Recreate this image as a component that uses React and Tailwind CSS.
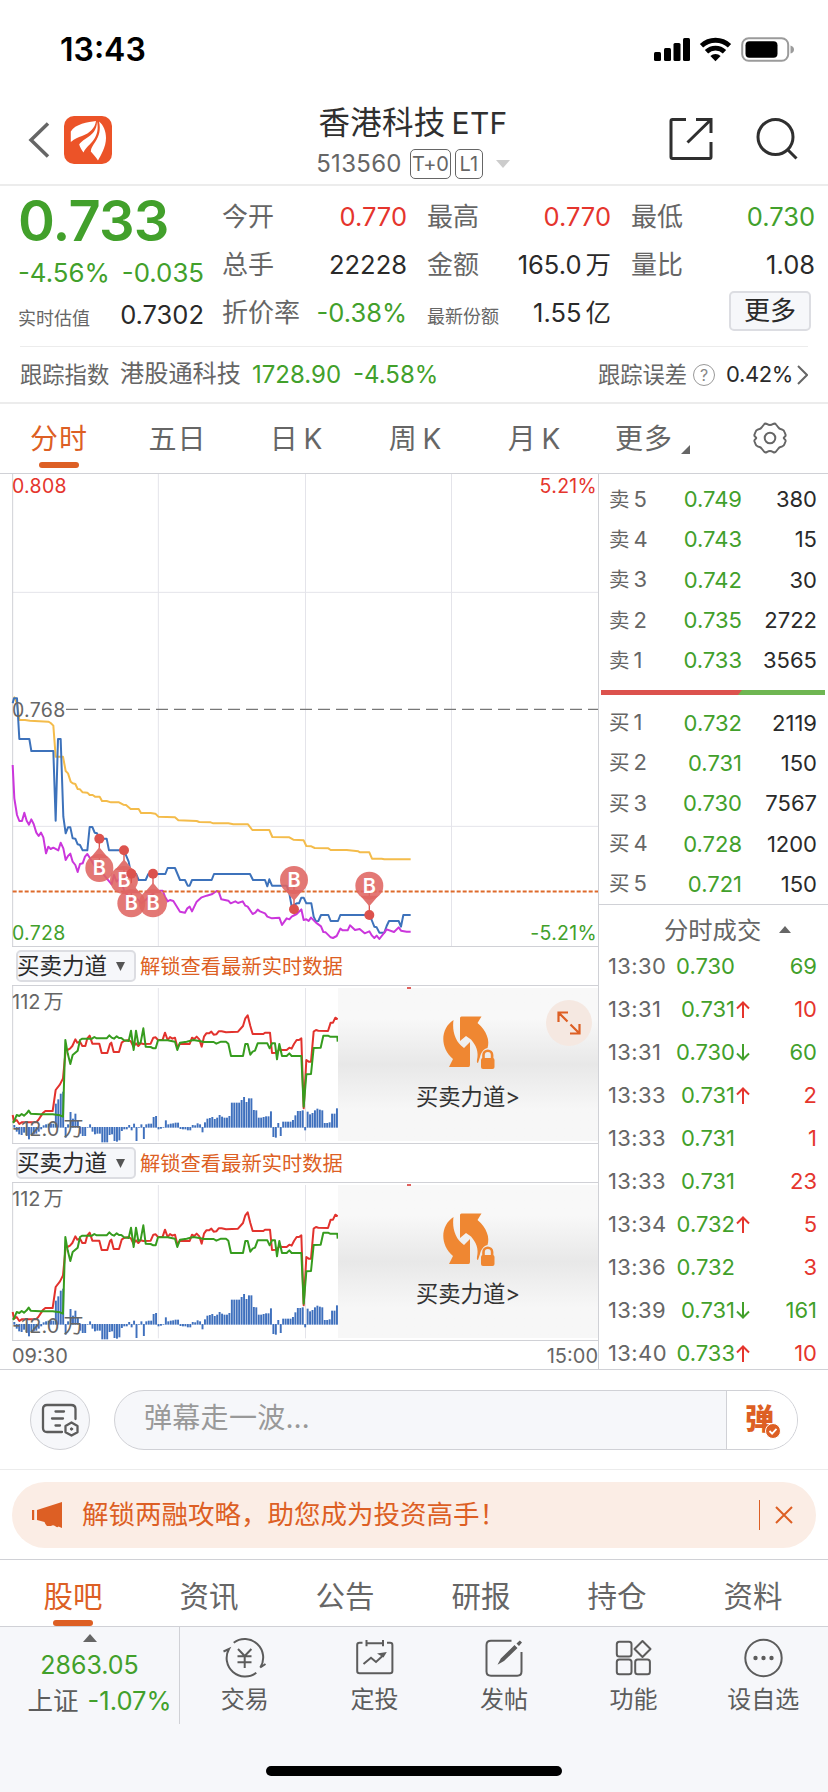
import { Fragment } from "react";

const GREEN = "text-[#42a02b]";
const RED = "text-[#e5352d]";
const DARK = "text-[#2a2a2a]";

const stats = [
  { label: "今开", value: "0.770", color: RED },
  { label: "最高", value: "0.770", color: RED },
  { label: "最低", value: "0.730", color: GREEN },
  { label: "总手", value: "22228", color: DARK },
  { label: "金额", value: "165.0", unit: "万", color: DARK },
  { label: "量比", value: "1.08", color: DARK },
  { label: "折价率", value: "-0.38%", color: GREEN },
  { label: "最新份额", value: "1.55", unit: "亿", color: DARK, small: true },
];

const sells = [
  ["5", "0.749", "380"],
  ["4", "0.743", "15"],
  ["3", "0.742", "30"],
  ["2", "0.735", "2722"],
  ["1", "0.733", "3565"],
];

const buys = [
  ["1", "0.732", "2119"],
  ["2", "0.731", "150"],
  ["3", "0.730", "7567"],
  ["4", "0.728", "1200"],
  ["5", "0.721", "150"],
];

const trades = [
  ["13:30", "0.730", "", "69", GREEN],
  ["13:31", "0.731", "up", "10", RED],
  ["13:31", "0.730", "down", "60", GREEN],
  ["13:33", "0.731", "up", "2", RED],
  ["13:33", "0.731", "", "1", RED],
  ["13:33", "0.731", "", "23", RED],
  ["13:34", "0.732", "up", "5", RED],
  ["13:36", "0.732", "", "3", RED],
  ["13:39", "0.731", "down", "161", GREEN],
  ["13:40", "0.733", "up", "10", RED],
];

// chart series, three units to the pixel
const priceLine =
  "38,700 42,685 51,685 58,807 88,807 94,843 160,843 167,1052 174,807 182,807 190,1040 197,1090 204,1072 211,1072 218,1105 226,1106 233,1123 240,1125 248,1141 262,1141 269,1071 277,1071 284,1088 291,1090 298,1106 320,1106 327,1141 372,1141 386,1175 393,1211 408,1211 416,1230 437,1230 445,1212 496,1212 503,1194 525,1194 540,1230 555,1230 563,1247 569,1247 576,1230 635,1230 642,1212 750,1212 759,1230 795,1230 802,1249 808,1228 816,1247 860,1247 868,1270 875,1310 890,1300 897,1300 904,1283 911,1283 919,1300 934,1300 941,1340 948,1354 955,1353 963,1335 985,1335 992,1353 1014,1353 1021,1335 1108,1335 1115,1350 1123,1370 1130,1372 1138,1388 1153,1388 1160,1368 1167,1353 1196,1353 1203,1370 1210,1335 1232,1335";
const averageLine =
  "42,680 51,700 58,750 75,750 90,752 145,755 152,759 160,767 167,860 189,860 197,903 204,910 212,935 218,940 226,942 233,957 240,958 248,967 262,968 269,975 278,975 285,980 299,980 306,993 320,993 333,997 357,997 370,1004 378,1005 392,1017 416,1017 423,1029 452,1029 466,1031 475,1040 525,1042 535,1051 590,1053 598,1056 632,1057 640,1060 685,1060 700,1063 744,1063 757,1080 808,1080 817,1101 868,1102 880,1109 911,1111 919,1128 934,1129 944,1134 985,1135 992,1140 1040,1140 1075,1144 1080,1147 1108,1147 1116,1166 1145,1166 1153,1168 1232,1168";
const indexLine =
  "38,885 43,985 51,1035 58,1053 66,1053 73,1028 80,1052 87,1064 94,1048 101,1062 109,1088 116,1098 123,1088 130,1102 138,1150 145,1130 152,1137 160,1133 175,1141 182,1118 190,1135 197,1170 204,1158 211,1151 218,1175 226,1185 233,1206 240,1182 248,1180 255,1160 262,1152 272,1168 285,1190 300,1200 320,1225 335,1243 342,1215 350,1235 360,1225 372,1260 385,1280 393,1300 410,1285 425,1300 437,1290 459,1270 475,1262 488,1262 495,1280 503,1294 510,1290 520,1293 540,1325 555,1328 562,1315 569,1310 576,1324 590,1295 605,1282 620,1277 635,1273 650,1263 656,1265 664,1288 685,1292 692,1300 706,1294 714,1299 728,1294 736,1307 743,1310 758,1332 766,1328 773,1319 780,1324 795,1330 802,1340 816,1345 838,1343 846,1365 853,1355 860,1345 868,1348 875,1340 890,1332 904,1318 911,1350 919,1348 926,1353 933,1343 948,1358 963,1369 970,1386 977,1387 992,1402 999,1404 1010,1398 1021,1376 1028,1381 1043,1381 1050,1366 1065,1380 1079,1377 1094,1390 1108,1384 1116,1397 1123,1404 1130,1397 1138,1407 1153,1388 1160,1378 1182,1386 1196,1372 1203,1382 1220,1385 1232,1385";
const buyForce =
  "38,525 42,545 50,540 58,552 65,547 108,547 115,540 128,520 136,513 158,513 167,450 180,433 189,415 197,330 202,330 210,326 217,318 226,298 232,308 240,305 247,318 256,318 262,295 269,287 277,311 298,311 305,339 322,339 330,312 334,308 341,336 357,336 365,308 372,303 386,300 393,305 400,320 408,310 415,318 422,310 430,312 452,311 460,293 467,292 474,300 488,299 495,278 503,300 510,291 517,296 525,293 532,322 540,311 569,312 576,293 583,297 590,290 598,298 605,320 612,290 619,280 627,280 634,275 641,284 649,283 656,274 665,274 678,277 714,275 729,258 736,235 743,226 751,258 758,282 790,282 795,278 810,278 816,339 830,338 838,328 846,330 860,330 868,323 875,326 882,312 890,300 897,300 904,295 911,505 919,360 926,365 933,365 941,275 948,270 955,272 984,273 992,248 999,248 1006,233 1013,238";
const sellForce =
  "38,548 42,545 50,525 58,528 65,522 72,527 80,520 86,512 92,521 121,523 158,523 180,526 189,530 196,300 203,340 211,372 218,345 233,332 240,300 247,296 276,296 283,291 290,295 320,295 328,286 335,293 342,296 350,289 357,294 364,294 372,301 386,303 393,272 401,330 408,272 415,312 422,308 430,265 437,320 452,321 460,325 467,325 474,301 503,301 525,305 532,330 540,308 560,305 580,300 598,303 612,306 641,306 649,311 663,305 678,305 685,311 693,348 729,348 736,312 743,312 751,344 758,335 765,332 773,310 802,310 809,325 816,310 825,310 831,358 838,312 846,348 860,348 868,340 875,348 904,348 911,500 919,403 933,402 941,324 962,323 970,287 984,287 990,290 1012,290 1013,305";
const netForce = [
  6, -12, -20, -22, -15, -22, -35, -22, -20, -18, -12, -5, 5, 8, 10, 10, 10, 70, 83, 100, 106, -30, 8, 45, 25, 40, 20,
  -18, -25, -25, 0, 8, -12, -20, -18, -18, -44, -44, -44, -22, -20, -40, -42, -38, -10, -5, -5, 6, -8, 10, -40, 0, 8,
  -34, 8, 10, 10, 30, 33, -5, -3, 0, 20, 8, 10, 11, 13, 13, -4, -5, -5, -8, -8, 6, 5, 11, 8, -14, 14, 25, 27, 30, 24,
  28, 36, 31, 28, 28, 33, 73, 73, 73, 73, 81, 90, 75, 86, 86, 51, 50, 28, 28, 30, 32, 32, 47, -28, -30, 12, -25, 16, 16,
  16, 16, 21, 35, 48, 48, 50, -8, 46, 38, 42, 50, 55, 52, 50, 12, 12, 14, 40, 40, 56, 50,
];

const markers = [
  { x: 298, dot: 1106, y: 1194 },
  { x: 372, dot: 1141, y: 1230 },
  { x: 394, dot: 1211, y: 1300 },
  { x: 459, dot: 1211, y: 1300 },
  { x: 882, dot: 1318, y: 1230 },
  { x: 1108, dot: 1335, y: 1247 },
];

function StatusBar() {
  return (
    <div className="h-[88px] pt-[11px] pl-[60px] pr-[34px] flex items-center justify-between text-black">
      <span className="text-[32px] leading-[40px] font-semibold">13:43</span>
      <svg width="142" height="28" viewBox="0 0 142 28">
        <g transform="translate(1 1)">
          <rect x="1" y="15" width="7" height="9" rx="1.5" />
          <rect x="11" y="11" width="7" height="13" rx="1.5" />
          <rect x="20.500" y="6" width="7" height="18" rx="1.500" />
          <rect x="30" y="1" width="7" height="23" rx="1.5" />
          <g fill="none" stroke="#000" strokeWidth="4.800">
            <path d="M48.500 8.800a20.500 20.500 0 0 1 28 0" />
            <path d="M53.500 14.800a13 13 0 0 1 18 0" />
          </g>
          <path d="M57.400 19a7.500 7.500 0 0 1 10.200 0l-5.100 5.200z" />
          <rect x="89.200" y="1.200" width="46" height="22.600" rx="6.500" fill="none" stroke="#9b9b9b" strokeWidth="2" />
          <rect x="92.500" y="4.300" width="32" height="16.400" rx="4" />
          <path d="M137.500 8.500q3.500 1 3.500 4t-3.500 4z" fill="#9b9b9b" />
        </g>
      </svg>
    </div>
  );
}

function Header() {
  return (
    <div className="h-[98px] border-b-2 border-[#ececec] flex items-start justify-between pl-[28px] pr-[29px]">
      <div className="w-[170px] flex items-center gap-[14px] pt-[28px]">
        <svg width="22" height="36" viewBox="0 0 22 36" fill="none" stroke="#666" strokeWidth="3.500">
          <path d="M20 1.500L3 18l17 16.500" />
        </svg>
        <svg width="48" height="48" viewBox="0 0 48 48">
          <rect width="48" height="48" rx="10" fill="#ec5328" />
          <g fill="#fff">
            <path d="M32 5C24 6 11 8 6.800 15.500V26C11 22.500 14 21.500 18 20C26 17 31 12 32 5Z" />
            <path d="M33 5.500C33 14 28 19 22 22.500C18 25 16 27 15.200 28.500C16 31 17.500 34 19.500 36.500C22 31 26 29 29.500 24C33.500 18.500 34.500 12 33 5.500Z" />
            <path d="M35 5.500C37 14 35 20 31.500 25.500C28.500 30 27 32 26.800 35.500C29 38 32 41 34 44.500C37 39 42 31 42 22C42 15 39.500 9 35 5.500Z" />
          </g>
        </svg>
      </div>
      <div className="flex flex-col items-center">
        <h1 className="mt-[15px] text-[31.500px] leading-[40px] text-[#2f2f2f] tracking-[0.3px]">
          香港科技<span className="ml-[6px] text-[30px]">ETF</span>
        </h1>
        <div className="mt-[6px] flex items-center gap-[4px] text-[#666] leading-[30px]">
          <span className="text-[24px] tracking-[0.3px] mr-[4px]">513560</span>
          <span className="h-[30px] w-[41px] border border-[#666] rounded-[5px] text-[20px] leading-[28px] flex justify-center tracking-[-0.3px]">T+0</span>
          <span className="h-[30px] w-[28px] border border-[#666] rounded-[5px] text-[20px] leading-[28px] flex justify-center">L1</span>
          <svg className="ml-[9px]" width="14" height="8" viewBox="0 0 14 8"><path d="M0 0h14L7 8z" fill="#ccc" /></svg>
        </div>
      </div>
      <div className="w-[171px] flex items-center justify-end gap-[42px] pt-[29px]">
        <svg width="44" height="44" viewBox="0 0 44 44" fill="none" stroke="#2f2f2f" strokeWidth="3">
          <path d="M17 2.500H3.500Q2 2.500 2 4v36Q2 41.500 3.500 41.500h37Q42 41.500 42 40V25" />
          <path d="M27 2.500h15V16M41.500 3L18.500 25.500" />
        </svg>
        <svg width="44" height="44" viewBox="0 0 44 44" fill="none" stroke="#2f2f2f" strokeWidth="3">
          <circle cx="20.500" cy="20" r="17.500" />
          <path d="M32.500 32.500L41.500 41.500" />
        </svg>
      </div>
    </div>
  );
}

function Quote() {
  return (
    <div>
      <div className="h-[160px] flex text-[26px] leading-[48px]">
        <div className="w-[222px] pl-[18px] pr-[18px] pt-[7px]">
          <div className={`${GREEN} text-[56px] leading-[56px] font-semibold tracking-[-0.8px]`}>0.733</div>
          <div className={`${GREEN} flex justify-between text-[25.8px]`}>
            <span>-4.56%</span>
            <span>-0.035</span>
          </div>
          <div className="flex justify-between -mt-[6px]">
            <span className="text-[18px] text-[#666] pt-[4px]">实时估值</span>
            <span className={`${DARK} text-[25.5px]`}>0.7302</span>
          </div>
        </div>
        <div className="flex-1 grid grid-cols-[185px_184px_184px] grid-rows-[48px_48px_48px] gap-x-[20px] pt-[7px]">
          {stats.map((s) => (
            <div key={s.label} className="flex justify-between">
              <span className={s.small ? "text-[18px] text-[#666] pt-[4px]" : "text-[#666]"}>{s.label}</span>
              <span className={`${s.color} text-[25.500px]`}>
                {s.value}
                {s.unit && <span className="ml-[4px]">{s.unit}</span>}
              </span>
            </div>
          ))}
          <button className="justify-self-end mr-[4px] mt-[2px] w-[82px] h-[40px] border-2 border-[#dcdde2] rounded-[5px] bg-[#f6f7fa] leading-[34px] text-[#2a2a2a]">
            更多
          </button>
        </div>
      </div>
      <div className="mx-[20px] h-[56px] border-t border-[#ececec] flex items-center text-[24px] text-[#666]">
        <span className="text-[22.300px] w-[100px]">跟踪指数</span>
        <span className="w-[132px] text-[24.200px]">港股通科技</span>
        <span className={`${GREEN} w-[101px]`}>1728.90</span>
        <span className={GREEN}>-4.58%</span>
        <span className="ml-auto text-[22.300px]">跟踪误差</span>
        <span className="ml-[6px] w-[22px] h-[22px] rounded-full border border-[#999] text-[#888] text-[16px] leading-[20px] text-center">?</span>
        <span className={`${DARK} ml-[11px] text-[22px] tracking-[-0.4px]`}>0.42%</span>
        <svg className="ml-[4px]" width="11" height="20" viewBox="0 0 11 20" fill="none" stroke="#666" strokeWidth="2">
          <path d="M1 1l9 9-9 9" />
        </svg>
      </div>
    </div>
  );
}

function PeriodTabs() {
  return (
    <div className="h-[72px] border-t-2 border-b border-t-[#ececec] border-b-[#d0d1d6] flex text-[28px] leading-[70px] text-[#666] tracking-[1px]">
      <div className="w-[118px] flex flex-col items-center text-[#dd5f24]">
        <span className="h-[58px]">分时</span>
        <span className="w-[40px] h-[6px] rounded-full bg-[#dd5f24]" />
      </div>
      {["五日", "日 K", "周 K", "月 K"].map((t) => (
        <div key={t} className="w-[119px] text-center [word-spacing:-4px]">{t}</div>
      ))}
      <div className="w-[117px] flex justify-center">
        更多
        <svg className="mt-[41px] ml-[8px]" width="9" height="9" viewBox="0 0 9 9"><path d="M9 0v9H0z" fill="#666" /></svg>
      </div>
      <div className="flex-1 flex justify-center items-center pb-[2px]">
        <svg width="34" height="34" viewBox="0 0 34 34" fill="none" stroke="#666" strokeWidth="2" strokeLinejoin="round">
          <path d="M11 3.500Q12 2 14 3Q17 5 20 3Q22 2 23 3.500L25 6Q26 8 29 8.500Q31 9 31.500 11L32.500 13.500Q33 15 31.500 16Q30 17 31.500 18Q33 19 32.500 20.500L31.500 23Q31 25 29 25.500Q26 26 25 28L23 30.500Q22 32 20 31Q17 29 14 31Q12 32 11 30.500L9 28Q8 26 5 25.500Q3 25 2.500 23L1.500 20.500Q1 19 2.500 18Q4 17 2.500 16Q1 15 1.500 13.500L2.500 11Q3 9 5 8.500Q8 8 9 6Z" />
          <circle cx="17" cy="17" r="5.300" />
        </svg>
      </div>
    </div>
  );
}

function PriceChart() {
  return (
    <div className="relative h-[473px] border-b border-[#d0d1d6] ml-[12px]">
      <svg className="-ml-[12px]" width="598" height="472" viewBox="0 12 1794 1416" fill="none">
        <g stroke="#e4e4ea" strokeWidth="3">
          <path d="M475 12V1428M916.500 12V1428M1354.500 12V1428M38 367H1794M38 1069H1794" />
          <path d="M38 12V1428" stroke="#d0d1d6" />
        </g>
        <path d="M198 718H1794" stroke="#777" strokeWidth="3.500" strokeDasharray="36 18" />
        <g strokeWidth="6" strokeLinejoin="round">
          <polyline points={averageLine} stroke="#f4bc4b" />
          <polyline points={priceLine} stroke="#3d72bb" />
          <polyline points={indexLine} stroke="#cb36dc" />
        </g>
        <path d="M38 1264.500H1794" stroke="#de6b2c" strokeWidth="6" strokeDasharray="12 6" />
        {markers.map((m) => {
          const side = m.dot < m.y ? -1 : 1;
          return (
            <g key={m.x}>
              <path d={`M${m.x} ${m.dot}V${m.y}`} stroke="#d9544f" strokeWidth="4" />
              <path d={`M${m.x - 27} ${m.y + side * 30}L${m.x} ${m.y + side * 62}L${m.x + 27} ${m.y + side * 30}Z`} fill="#e17370" />
              <circle cx={m.x} cy={m.y} r="42" fill="#df6562" fillOpacity="0.88" />
              <text x={m.x} y={m.y + 21} textAnchor="middle" fontSize="60" fontWeight="600" fill="#fff">B</text>
              <circle cx={m.x} cy={m.dot} r="15" fill="#dc524d" />
            </g>
          );
        })}
      </svg>
      <div className="absolute inset-0 flex flex-col justify-between text-[19.500px] leading-[24px] pr-[1px] tracking-[0.3px]">
        <div className={`flex justify-between ${RED}`}><span>0.808</span><span>5.21%</span></div>
        <div className="text-[#666]">0.768</div>
        <div className={`flex justify-between ${GREEN} pb-[1px]`}><span>0.728</span><span>-5.21%</span></div>
      </div>
    </div>
  );
}

function ForcePanel({ expandable }) {
  return (
    <div className="h-[197px]">
      <div className="ml-[12px] h-[39px] pt-[3px] pl-[4px] flex items-start border-b border-[#d0d1d6]">
        <div className="w-[120px] h-[32px] border-2 border-[#dcdde2] rounded-[5px] bg-[#f6f7fa] text-[22.500px] leading-[28px] text-[#2a2a2a] flex items-center justify-between pr-[9px]">
          <span className="-ml-px">买卖力道</span>
          <svg width="9" height="9" viewBox="0 0 9 9"><path d="M0 0h9L4.500 9z" fill="#555" /></svg>
        </div>
        <span className="ml-[4px] text-[20.300px] leading-[34px] text-[#dd5f24]">解锁查看最新实时数据</span>
      </div>
      <div className="relative h-[158px] ml-[12px] border-b border-[#d0d1d6]">
        <svg className="-ml-[12px]" width="350" height="157" viewBox="0 138 1050 471" fill="none">
          <path d="M475 144V604M916.500 144V604" stroke="#e4e4ea" strokeWidth="3" />
          <path d="M38 138V609" stroke="#d0d1d6" strokeWidth="3" />
          <g fill="#3f70bd">
            {netForce.map((v, i) => (
              <rect key={i} x={40 + i * 7.333} y={v > 0 ? 561 - v : 561} width="5.8" height={Math.abs(v) + 2} />
            ))}
          </g>
          <g strokeWidth="6" strokeLinejoin="round">
            <polyline points={buyForce} stroke="#e2322d" />
            <polyline points={sellForce} stroke="#369c1e" />
          </g>
        </svg>
        <div className="absolute inset-0 flex flex-col justify-between text-[20px] leading-[24px] text-[#666]">
          <span className="pt-[4px]">112<span className="ml-[3px]">万</span></span>
          <span className="pb-[2px]">-12.0<span className="ml-[4px]">万</span></span>
        </div>
        <div className="absolute left-[326px] right-0 top-[2px] bottom-[2px] bg-linear-to-b from-[#f8f8f8] from-20% via-[#e8e8e8] via-50% to-[#f7f7f7] to-80% flex flex-col items-center">
          <div className="absolute -top-px left-[69px] w-[4px] h-[2px] bg-[#e0605c]" />
          <svg className="mt-[28px]" width="54" height="54" viewBox="0 0 54 54" fill="#ef8732">
            <path d="M12.500 4C0 12 -2 31 12 43L8 51H27.500Q29 51 29 49V26L23 32C14 26 11 15 12.500 4Z" />
            <path d="M19 2Q19 .5 20.500 .5H40.500L36.500 7C46 15 49 25 46.500 32C42 33 40 37 39 41L37 47Q35.500 47 36 44C38 36 35 29 30 23.500L25 20L19 25Z" />
            <rect x="40" y="42" width="13.500" height="11" rx="2" />
            <path d="M42.500 43V39a4.300 4.300 0 0 1 8.600 0V43" fill="none" stroke="#ef8732" strokeWidth="2.600" />
          </svg>
          <div className="mt-[13px] text-[22.300px] leading-[28px] text-[#333]">买卖力道&gt;</div>
          {expandable && (
            <div className="absolute right-[6px] top-[12px] w-[46px] h-[46px] rounded-full bg-[#f5e8e1] flex items-center justify-center">
              <svg width="24" height="24" viewBox="0 0 24 24" fill="none" stroke="#dd5f24" strokeWidth="2.200">
                <path d="M1.500 11V1.500H11M2 2l8.500 8.500M22.500 13v9.500H13M22 22l-8.500-8.500" />
              </svg>
            </div>
          )}
        </div>
      </div>
    </div>
  );
}

function BookRow({ side, row }) {
  return (
    <div className="flex h-[40.300px] items-center text-[22px] leading-[40px]">
      <span className="w-[43px] text-[#666] text-[20.500px]">{side}<span className="ml-[4px] text-[22px]">{row[0]}</span></span>
      <span className={`${GREEN} w-[90px] text-right`}>{row[1]}</span>
      <span className={`${DARK} flex-1 text-right`}>{row[2]}</span>
    </div>
  );
}

function OrderBook() {
  return (
    <div className="w-[230px] border-l border-[#d0d1d6]">
      <div className="h-[431px] border-b border-[#d0d1d6] pt-[5px]">
        <div className="pl-[10px] pr-[11px]">
          {sells.map((r) => <BookRow key={r[0]} side="卖" row={r} />)}
        </div>
        <div className="mt-[10px] mb-[7px] ml-[2px] mr-[3px] h-[5px] bg-[#6fb652]">
          <svg width="141" height="5" viewBox="0 0 141 5"><path d="M0 0h141l-4 5H0z" fill="#dc524d" /></svg>
        </div>
        <div className="pl-[10px] pr-[11px]">
          {buys.map((r) => <BookRow key={r[0]} side="买" row={r} />)}
        </div>
      </div>
      <div className="h-[40px] flex items-center pl-[65px] text-[24.300px] text-[#666] leading-[40px] pt-[9px]">
        分时成交
        <svg className="ml-[18px]" width="12" height="7" viewBox="0 0 12 7"><path d="M0 7h12L6 0z" fill="#666" /></svg>
      </div>
      <div className="pl-[9px] pr-[11px] h-[424px] overflow-hidden">
        {trades.map(([time, price, dir, vol, color], i) => (
          <div key={i} className="h-[43px] flex text-[22px] leading-[43px]">
            <span className="w-[59px] text-[#666] tracking-[0.4px]">{time}</span>
            <span className={`${GREEN} w-[68px] text-right`}>{price}</span>
            <span className="w-[16px] flex items-center pl-px">
              {dir && (
                <svg className={dir === "up" ? "text-[#e5352d]" : "text-[#42a02b] rotate-180"} width="14" height="17" viewBox="0 0 14 17" fill="none" stroke="currentColor" strokeWidth="2">
                  <path d="M7 17V1.500M1 7.500l6-6 6 6" />
                </svg>
              )}
            </span>
            <span className={`${color} flex-1 text-right`}>{vol}</span>
          </div>
        ))}
      </div>
    </div>
  );
}

function CommentBar() {
  return (
    <div className="h-[101px] border-y border-t-[#d0d1d6] border-b-[#ececec] flex items-center pl-[30px] pr-[30px]">
      <div className="w-[60px] h-[60px] rounded-full border border-[#d0d1d6] bg-[#f6f7fa] flex items-center justify-center">
        <svg width="38" height="34" viewBox="0 0 38 34" fill="none" stroke="#5c5c5c" strokeWidth="2.300" strokeLinecap="round">
          <path d="M21 29H6Q2 29 2 25V6Q2 2 6 2H30Q34.500 2 34.500 6V16" />
          <path d="M14.500 8.500H23M11 15.500H22M14.500 22.500H19" />
          <path d="M30.500 19.500l6 3.400v6.300l-6 3.400-6-3.400v-6.300z" strokeLinejoin="round" />
          <circle cx="30.500" cy="26" r="1.200" fill="#5c5c5c" strokeWidth="1" />
        </svg>
      </div>
      <div className="ml-[24px] flex-1 h-[60px] rounded-full border border-[#d0d1d6] bg-[#f6f7fa] flex overflow-hidden">
        <span className="flex-1 pl-[29px] text-[28px] leading-[55px] text-[#999] tracking-[0.3px]">弹幕走一波…</span>
        <div className="w-[71px] border-l border-[#d0d1d6] bg-white flex items-center pl-[18px]">
          <div className="relative w-[38px] text-[#dd5f24] text-[29px] leading-[58px] font-black">
            弹
            <svg className="absolute left-[20px] top-[32px]" width="16" height="16" viewBox="0 0 16 16">
              <circle cx="8" cy="8" r="7.500" fill="#dd5f24" stroke="#fff" />
              <path d="M4.500 8l2.600 2.600 4.400-4.700" fill="none" stroke="#fff" strokeWidth="1.800" />
            </svg>
          </div>
        </div>
      </div>
    </div>
  );
}

function Banner() {
  return (
    <div className="h-[90px] px-[12px] pt-[12px] border-b border-[#d0d1d6]">
      <div className="h-[66px] rounded-full bg-[#fbede5] flex items-center pl-[20px] pr-[23px] text-[#dd5f24]">
        <svg width="30" height="26" viewBox="0 0 30 26" fill="#dd5f24">
          <rect x="0" y="8" width="2.200" height="10" />
          <path d="M5 8L30 0V26L26.500 24.500Q25 26 23 24Q21 22.500 19 24H15Q13 22 12.500 20L5 18Z" />
        </svg>
        <span className="ml-[20px] text-[26.500px]">解锁两融攻略，助您成为投资高手！</span>
        <span className="ml-auto w-px h-[30px] bg-[#dd5f24]" />
        <svg className="ml-[15px]" width="18" height="18" viewBox="0 0 18 18" stroke="#dd5f24" strokeWidth="2">
          <path d="M1 1l16 16M17 1L1 17" />
        </svg>
      </div>
    </div>
  );
}

function NewsTabs() {
  return (
    <div className="h-[67px] border-b border-[#d0d1d6] pl-[5px] pr-[7px] flex text-[29.500px] text-[#666] leading-[72px]">
      {["股吧", "资讯", "公告", "研报", "持仓", "资料"].map((t, i) => (
        <div key={t} className={`flex-1 flex flex-col items-center ${i === 0 ? "text-[#dd5f24]" : ""}`}>
          <span className="h-[60px]">{t}</span>
          {i === 0 && <span className="w-[40px] h-[6px] rounded-full bg-[#dd5f24]" />}
        </div>
      ))}
    </div>
  );
}

const actions = [
  {
    label: "交易",
    icon: (
      <Fragment>
        <path d="M9.700 4.700A18.500 18.500 0 0 1 36.300 29.500L41.500 26M32.300 34.800A18.500 18.500 0 0 1 5 11L-.5 13.500" />
        <path d="M14 11l6.700 7 6.700-7M20.700 18v12M13.500 18.300h14M13.500 24.300h14" />
      </Fragment>
    ),
  },
  {
    label: "定投",
    icon: (
      <Fragment>
        <path d="M8.500 4.800H5.500Q3.200 4.800 3.200 7V33Q3.200 35.300 5.500 35.300H36Q38.400 35.300 38.400 33V7Q38.400 4.800 36 4.800H33M12.500 5.300H29M12.500 2v6.300M29 2v6.300" />
        <path d="M9.500 26l7.500-6.300 5 4.300 7-6.500" />
        <path d="M23 15.500l9.800-1.500-3.300 5.500z" fill="#5c5c5c" stroke="none" />
      </Fragment>
    ),
  },
  {
    label: "发帖",
    icon: (
      <Fragment>
        <path d="M28.500 2.700H8Q3.500 2.700 3.500 7V33.500Q3.500 37.700 8 37.700H34.200Q38.500 37.700 38.500 33.500V14" />
        <path d="M31.500 7L34.500 10L21 23L14.500 26.800L17.800 20.500ZM33.500 5.500L36.800 2.500L39 4.500L36 8Z" fill="#5c5c5c" stroke="none" />
      </Fragment>
    ),
  },
  {
    label: "功能",
    icon: (
      <Fragment>
        <rect x="3.800" y="3.700" width="14.700" height="14.700" rx="2.500" />
        <rect x="3.800" y="21.500" width="14.700" height="14.700" rx="2.500" />
        <rect x="22.200" y="21.500" width="14.700" height="14.700" rx="2.500" />
        <path d="M29.500 3l8 8-8 8-8-8z" strokeLinejoin="round" />
      </Fragment>
    ),
  },
  {
    label: "设自选",
    icon: (
      <Fragment>
        <circle cx="20.500" cy="20" r="18.200" />
        <g fill="#5c5c5c" stroke="none">
          <circle cx="12.500" cy="20" r="2.200" />
          <circle cx="20.500" cy="20" r="2.200" />
          <circle cx="28.500" cy="20" r="2.200" />
        </g>
      </Fragment>
    ),
  },
];

function BottomBar() {
  return (
    <div className="h-[165px] bg-[#f6f7fa] flex flex-col justify-between items-center pb-[16px]">
      <div className="w-full h-[97px] flex text-[#5c5c5c]">
        <div className="w-[180px] border-r border-[#d0d1d6] flex flex-col items-center">
          <svg className="mt-[7px]" width="14" height="8" viewBox="0 0 14 8"><path d="M0 8h14L7 0z" fill="#666" /></svg>
          <div className={`${GREEN} text-[25px] leading-[35px] mt-[6px]`}>2863.05</div>
          <div className="text-[25.500px] leading-[35px] pl-[20px] whitespace-nowrap">
            上证<span className={`${GREEN} ml-[9px]`}>-1.07%</span>
          </div>
        </div>
        {actions.map((a) => (
          <div key={a.label} className="flex-1 flex flex-col items-center">
            <svg className="mt-[11px] overflow-visible" width="41" height="40" viewBox="0 0 41 40" fill="none" stroke="#5c5c5c" strokeWidth="2">
              {a.icon}
            </svg>
            <span className="mt-[5px] text-[24px] leading-[34px]">{a.label}</span>
          </div>
        ))}
      </div>
      <div className="w-[296px] h-[10px] rounded-full bg-black" />
    </div>
  );
}

export default function App() {
  return (
    <div className="w-[828px] h-[1792px] bg-white overflow-hidden font-['Inter','Noto_Sans_CJK_SC',sans-serif] font-normal">
      <StatusBar />
      <Header />
      <Quote />
      <PeriodTabs />
      <div className="flex h-[895px]">
        <div className="w-[598px]">
          <PriceChart />
          <ForcePanel expandable />
          <ForcePanel />
          <div className="pl-[12px] flex justify-between text-[20px] leading-[30px] text-[#666]">
            <span>09:30</span>
            <span>15:00</span>
          </div>
        </div>
        <OrderBook />
      </div>
      <CommentBar />
      <Banner />
      <NewsTabs />
      <BottomBar />
    </div>
  );
}
